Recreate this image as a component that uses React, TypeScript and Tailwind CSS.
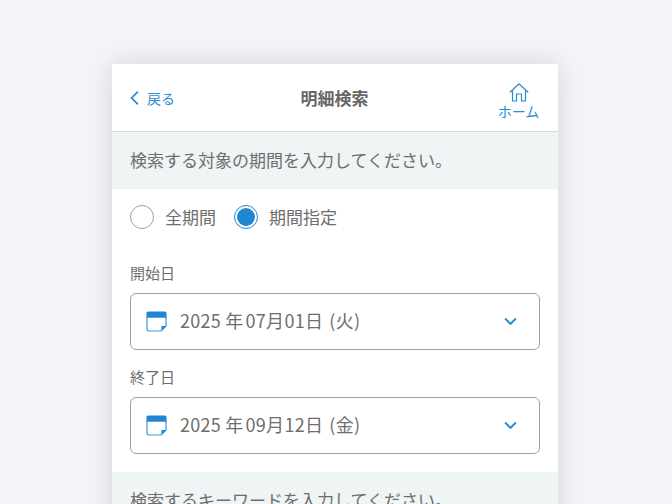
import React from 'react';
import { ChevronDown } from 'lucide-react';

const font = "font-['Noto_Sans_CJK_JP','Noto_Sans',sans-serif]";

const BackIcon = () => (
    <svg width="9" height="14" viewBox="0 0 9 14" fill="none" stroke="#1f87d1" strokeWidth="1.7" strokeLinecap="round" strokeLinejoin="round">
        <path d="M7.5 1.2 L1.5 7 L7.5 12.8" />
    </svg>
);

const HomeIcon = () => (
    <svg width="20" height="19" viewBox="0 0 20 19" fill="none" stroke="#2d8cd0" strokeWidth="1.2" strokeLinejoin="round">
        <path d="M0.8 9.5 L10 0.8 L19.2 9.5" />
        <path d="M3.5 7.5 V18 H7.5 V11 H12.5 V18 H16.5 V7.5" />
    </svg>
);

const CalendarIcon = () => (
    <svg width="21" height="21" viewBox="0 0 21 21" fill="none">
        <path d="M1 6 H20 V15 L15 20 H3 Q1 20 1 18 Z" fill="#fff" stroke="#3d98d8" strokeWidth="1.2" />
        <path d="M0.5 6.5 V2 Q0.5 0.5 2 0.5 H19 Q20.5 0.5 20.5 2 V6.5 Z" fill="#1f87d1" />
        <path d="M15 20.5 L20.5 15 H15.5 V20.5 Z" fill="#1f87d1" />
    </svg>
);

const DateField = ({ label, month, day, week }: { label: string; month: string; day: string; week: string }) => (
    <div className="flex flex-col">
        <div className="h-[47px] flex items-end pb-[10px] text-[15px] leading-[20px] text-[#6e6e6e]">{label}</div>
        <div className="h-[57px] flex items-center border border-[#a0a0a0] rounded-[6px] pl-[15px] pr-[19px]">
            <CalendarIcon />
            <span className="ml-[13px] mb-[2px] flex-1 text-[18px] text-[#6e6e6e] tracking-[0.3px] whitespace-nowrap">
                2025<span className="ml-[4px]">年</span><span className="ml-[2px]">{month}</span>月{day}日<span className="ml-[6px]">({week})</span>
            </span>
            <ChevronDown size={19} color="#1f87d1" strokeWidth={2.6} />
        </div>
    </div>
);

export default function App() {
    return (
        <div className={`w-[672px] h-[504px] overflow-hidden bg-[#f3f4f8] pt-[64px] pl-[112px] ${font}`}>
            <div className="w-[446px] h-[500px] bg-white shadow-[0_0_24px_rgba(0,0,0,0.13)]">
                {/* Header */}
                <div className="h-[68px] flex items-center justify-between border-b border-[#d5d8d8] pl-[18px] pr-[19px]">
                    <div className="w-[90px] flex items-center gap-[8px] text-[#2d8cd0] text-[14px]">
                        <BackIcon />
                        <span className="mt-[2px]">戻る</span>
                    </div>
                    <div className="text-[17px] font-bold text-[#666]">明細検索</div>
                    <div className="w-[90px] flex flex-col items-end text-[#2d8cd0] mt-[6px]">
                        <div className="w-[41px] flex flex-col items-center">
                            <HomeIcon />
                            <span className="text-[14px] leading-[16px] mt-[1px] whitespace-nowrap">ホーム</span>
                        </div>
                    </div>
                </div>

                <div className="h-[57px] flex items-center px-[18px] pb-[2px] bg-[#eff4f5] text-[17px] text-[#6e6e6e]">
                    検索する対象の期間を入力してください。
                </div>

                {/* Radios */}
                <div className="h-[57px] flex items-center px-[18px] text-[17px] text-[#6e6e6e]">
                    <span className="w-[24px] h-[24px] rounded-full border border-[#a0a0a0] -mt-[1px]" />
                    <span className="ml-[11px] -mt-[1px]">全期間</span>
                    <span className="ml-[18px] -mt-[1px] w-[24px] h-[24px] rounded-full border border-[#1f87d1] flex items-center justify-center">
                        <span className="w-[18px] h-[18px] rounded-full bg-[#1f87d1]" />
                    </span>
                    <span className="ml-[11px] -mt-[1px]">期間指定</span>
                </div>

                <div className="px-[18px] flex flex-col">
                    <DateField label="開始日" month="07" day="01" week="火" />
                    <DateField label="終了日" month="09" day="12" week="金" />
                </div>

                <div className="mt-[18px] h-[57px] flex items-center px-[18px] pb-[2px] bg-[#eff4f5] text-[17px] text-[#6e6e6e]">
                    検索するキーワードを入力してください。
                </div>
            </div>
        </div>
    );
}
